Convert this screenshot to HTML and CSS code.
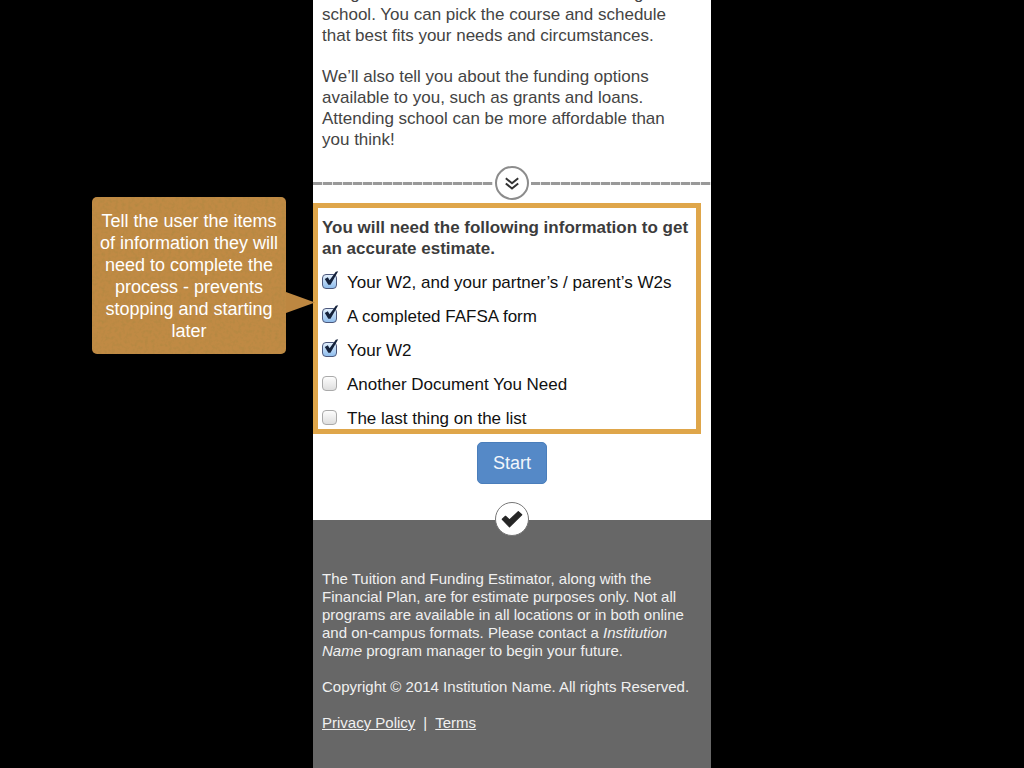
FILE: index.html
```html
<!DOCTYPE html>
<html lang="en">
<head>
<meta charset="utf-8">
<meta name="viewport" content="width=device-width, initial-scale=1">
<title>Tuition and Funding Estimator</title>
<link rel="stylesheet" href="styles.css">
</head>
<body>
<svg class="symbols" aria-hidden="true">
  <symbol id="tick" viewBox="0 0 18 20">
    <path d="M2.800 8L5.800 6.300 7.600 9.300 13.800.8 16.200.3 8.500 13.800H6.300z" fill="#14213a"/>
  </symbol>
</svg>
<div class="screen">
  <main class="content">
    <section class="intro">
      <p>budget and available time before attending school. You can pick the course and schedule that best fits your needs and circumstances.</p>
      <p>We’ll also tell you about the funding options available to you, such as grants and loans. Attending school can be more affordable than you think!</p>
    </section>

    <div class="divider">
      <span class="dashes"></span>
      <span class="badge">
        <svg width="16" height="16" viewBox="0 0 16 16" fill="none" stroke="#333" stroke-width="2"><path d="M1.800 3.300l6.200 5 6.200-5M1.800 8.500l6.200 5 6.200-5"/></svg>
      </span>
      <span class="dashes"></span>
    </div>

    <section class="needs">
      <h2>You will need the following information to get an accurate estimate.</h2>
      <ul class="checklist">
        <li><label><span class="box"><input type="checkbox" checked><svg class="tick"><use href="#tick"/></svg></span>Your W2, and your partner’s / parent’s W2s</label></li>
        <li><label><span class="box"><input type="checkbox" checked><svg class="tick"><use href="#tick"/></svg></span>A completed FAFSA form</label></li>
        <li><label><span class="box"><input type="checkbox" checked><svg class="tick"><use href="#tick"/></svg></span>Your W2</label></li>
        <li><label><span class="box"><input type="checkbox"><svg class="tick"><use href="#tick"/></svg></span>Another Document You Need</label></li>
        <li><label><span class="box"><input type="checkbox"><svg class="tick"><use href="#tick"/></svg></span>The last thing on the list</label></li>
      </ul>
      <aside class="callout">
        <svg class="grain" aria-hidden="true">
          <filter id="noise" x="0" y="0" width="100%" height="100%">
            <feTurbulence type="fractalNoise" baseFrequency="0.3" numOctaves="2" seed="4"/>
            <feColorMatrix values="0 0 0 0 0.4  0 0 0 0 0.24  0 0 0 0 0.05  0 0 0 1.2 -0.5"/>
          </filter>
          <rect width="100%" height="100%" filter="url(#noise)"/>
        </svg>
        <p>Tell the user the items of information they will need to complete the process - prevents stopping and starting later</p>
      </aside>
    </section>

    <button class="start" type="button">Start</button>
  </main>

  <footer class="footer">
    <span class="badge badge-done">
      <svg width="22" height="18" viewBox="0 0 22 18"><path d="M1.300 9.300L4.500 6.300 8.500 10 17.300 1.600 20.700 4.800 8.500 16.800z" fill="#262626" stroke="#262626" stroke-width="1.200" stroke-linejoin="round"/></svg>
    </span>
    <p>The Tuition and Funding Estimator, along with the Financial Plan, are for estimate purposes only. Not all programs are available in all locations or in both online and on-campus formats. Please contact a <em>Institution Name</em> program manager to begin your future.</p>
    <p>Copyright © 2014 Institution Name. All rights Reserved.</p>
    <p class="links"><a href="#privacy">Privacy Policy</a><span>|</span><a href="#terms">Terms</a></p>
  </footer>
</div>
</body>
</html>
```
FILE: styles.css
```css
* {
  box-sizing: border-box;
}

body {
  margin: 0;
  background: #000;
  color: #444;
  font: 17px/21px "Liberation Sans", Arial, sans-serif;
  overflow: hidden;
}

p, h2, ul {
  margin: 0;
  padding: 0;
}

.symbols {
  display: none;
}

/* The column is scrolled so that its first line is mostly out of view. */
.screen {
  display: flex;
  flex-direction: column;
  width: 100%;
  max-width: 398px;
  min-height: calc(100vh + 17px);
  margin: -17px auto 0;
  background: #fff;
}

.content {
  display: flex;
  flex-direction: column;
}

.intro {
  display: flex;
  flex-direction: column;
  gap: 20px;
  padding: 0 24px 0 9px;
}

.divider {
  display: flex;
  align-items: center;
  gap: 2px;
  margin-top: 16px;
}

.dashes {
  flex: 1;
  height: 3px;
  background: repeating-linear-gradient(90deg, #999 0 9px, #e4e4e4 9px 10px);
}

.badge {
  display: flex;
  align-items: center;
  justify-content: center;
  width: 34px;
  height: 34px;
  border: 2px solid #8c8c8c;
  border-radius: 50%;
  background: #fff;
}

.needs {
  position: relative;
  margin: 3px 10px 0 0;
  padding: 9px 0 0 4px;
  border: 5px solid #dfa64a;
}

.needs h2 {
  font-size: 17px;
  line-height: 21px;
  color: #3c3c3c;
}

.checklist {
  display: flex;
  flex-direction: column;
  gap: 13px;
  margin-top: 13px;
  color: #111;
  list-style: none;
}

.checklist label {
  display: flex;
  align-items: flex-start;
  gap: 10px;
}

.box {
  position: relative;
  display: flex;
  margin-top: 2px;
}

.box input {
  appearance: none;
  width: 15px;
  height: 15px;
  margin: 0;
  border: 1px solid #aaa;
  border-radius: 4px;
  background: linear-gradient(#fdfdfd, #dedede);
}

.box input:checked {
  border-color: #4c587c;
  background: linear-gradient(#e2effc, #8fbdec);
}

.tick {
  position: absolute;
  top: -3px;
  left: 0;
  width: 18px;
  height: 20px;
  display: none;
  pointer-events: none;
}

input:checked + .tick {
  display: block;
}

.callout {
  position: absolute;
  top: -11px;
  right: calc(100% + 32px);
  width: 194px;
  padding: 13px 5px 12px;
  border-radius: 5px;
  background: #c08a44;
  color: #fff;
  font-size: 18px;
  line-height: 22px;
  text-align: center;
}

.callout::after {
  content: "";
  position: absolute;
  top: 95px;
  left: 100%;
  width: 29px;
  height: 21px;
  background: #bd8741;
  clip-path: polygon(0 0, 100% 50%, 0 100%);
}

.callout p {
  position: relative;
}

.grain {
  position: absolute;
  inset: 0;
  width: 100%;
  height: 100%;
  border-radius: 5px;
}

.start {
  align-self: center;
  margin: 8px 0 36px;
  padding: 10px 15px;
  border: 1px solid #4a7ebb;
  border-radius: 5px;
  background: #5589c7;
  color: #f2f6fb;
  font: 18px/20px "Liberation Sans", Arial, sans-serif;
}

.footer {
  flex: 1;
  display: flex;
  flex-direction: column;
  gap: 18px;
  padding: 0 9px 36px;
  background: #676767;
  color: #f0f0f0;
  font-size: 15px;
  line-height: 18px;
}

.badge-done {
  align-self: center;
  margin: -18px 0 16px;
  border: 1px solid #777;
}

.links {
  display: flex;
  gap: 8px;
}

.links a {
  color: inherit;
}
```
